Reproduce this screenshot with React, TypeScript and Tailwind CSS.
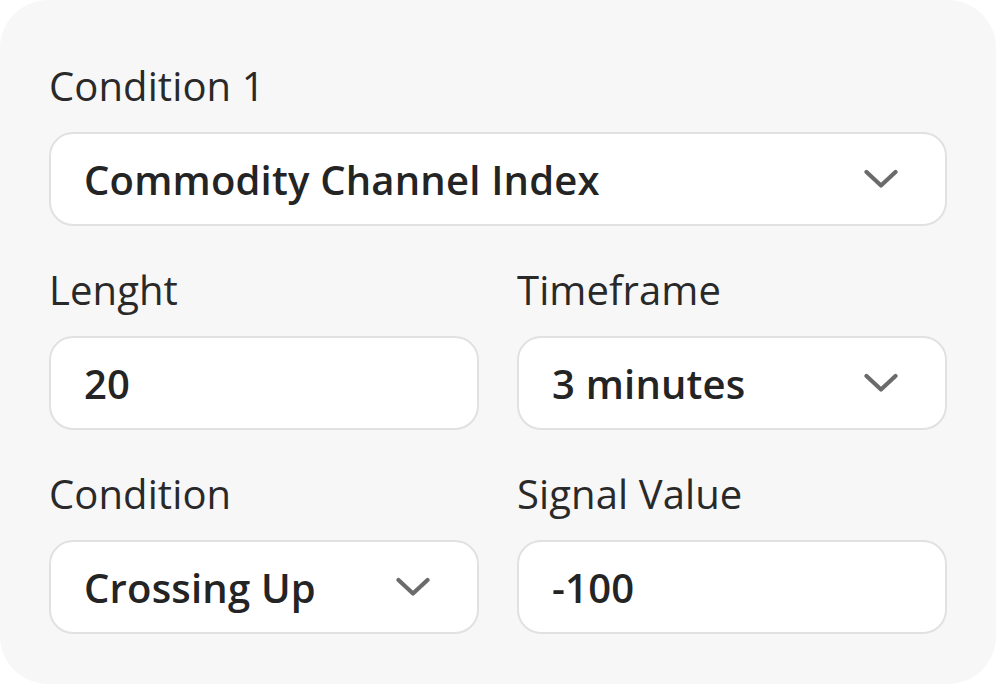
import React from 'react';

const Chevron = () => (
  <svg width="34" height="20" viewBox="0 0 34 20" fill="none" className="shrink-0">
    <path d="M2.5 3L17 16.5L31.5 3" stroke="#6b6b6b" strokeWidth="4.2" strokeLinecap="round" strokeLinejoin="round" />
  </svg>
);

interface FieldProps {
  label: string;
  value: string;
  select?: boolean;
}

const Field: React.FC<FieldProps> = ({ label, value, select }) => (
  <div className="flex flex-col min-w-0">
    <div className="text-[40px] leading-[54px] text-[#292929] mb-[19px] tracking-[0.1px]">{label}</div>
    <div className="h-[94px] flex items-center justify-between bg-white border-2 border-[#e1e1e1] rounded-[24px] pl-[33px] pr-[47px]">
      <span className="text-[40px] font-semibold text-[#242424] tracking-[0.2px] pt-[1px]">{value}</span>
      {select && <Chevron />}
    </div>
  </div>
);

export default function App() {
  return (
    <div className="w-[996px] h-[684px] bg-white" style={{ fontFamily: '"Open Sans", sans-serif' }}>
      <div className="w-full h-full bg-[#f7f7f7] rounded-[48px] pt-[59px] px-[49px] pb-[49px] flex flex-col gap-[37px]">
        <Field label="Condition 1" value="Commodity Channel Index" select />
        <div className="grid grid-cols-2 gap-x-[38px]">
          <Field label="Lenght" value="20" />
          <Field label="Timeframe" value="3 minutes" select />
        </div>
        <div className="grid grid-cols-2 gap-x-[38px]">
          <Field label="Condition" value="Crossing Up" select />
          <Field label="Signal Value" value="-100" />
        </div>
      </div>
    </div>
  );
}
